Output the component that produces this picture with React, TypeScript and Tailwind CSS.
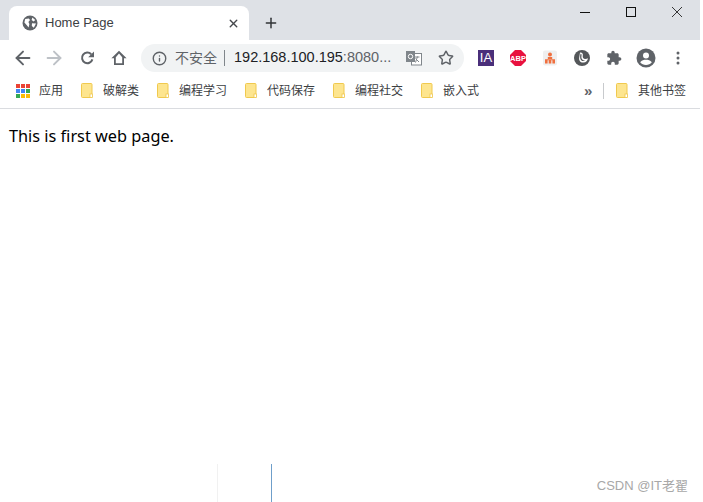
import { ArrowLeft, ArrowRight, Info, Star, X, Plus } from "lucide-react";

const FONT = "font-['Liberation_Sans','Noto_Sans_CJK_SC',sans-serif]";

const bookmarks = [
  { label: "破解类", width: "w-[76px]" },
  { label: "编程学习", width: "w-[88px]" },
  { label: "代码保存", width: "w-[88px]" },
  { label: "编程社交", width: "w-[88px]" },
  { label: "嵌入式", width: "w-[76px]" },
];

function Globe() {
  return (
    <svg width="16" height="16" viewBox="0 0 16 16" className="shrink-0">
      <circle cx="8" cy="8" r="7.5" fill="#5f6368" />
      <path d="M3.2 4 L6.8 3.4 L8 5 L6.4 7 L7.4 9 L6.6 12.4 L4.6 10 L2.4 7.4 Z" fill="#fff" />
      <path d="M10.4 2.6 L13.2 5 L11.6 6.4 L9.6 5 Z M10 8.2 L14 8.6 L11.8 12.8 L9.8 11 Z" fill="#fff" />
    </svg>
  );
}

function Reload() {
  return (
    <svg width="16" height="16" viewBox="0 0 16 16" className="shrink-0">
      <path d="M12.4 9.4a5.3 5.3 0 1 1-1.2-5.2" fill="none" stroke="#5f6368" strokeWidth="2" />
      <path d="M14 1.4v5.8H8.2z" fill="#5f6368" />
    </svg>
  );
}

function HomeIcon() {
  return (
    <svg width="16" height="16" viewBox="0 0 16 16" className="shrink-0">
      <path d="M8 .8 L15.6 8.2 H13 V15 H3 V8.2 H.4 Z M4.8 7.2 V13.3 H11.2 V7.2 L8 3.6 Z" fill="#5f6368" fillRule="evenodd" />
    </svg>
  );
}

function Translate() {
  return (
    <svg width="16" height="16" viewBox="0 0 16 16" className="shrink-0">
      <rect x="5.5" y="3.5" width="10" height="11.5" fill="#fff" stroke="#80868b" />
      <path d="M8.5 7h5M11.5 6.5l-2 6M9.5 8.5l3.5 3.5" stroke="#80868b" fill="none" />
      <rect x="0" y="1" width="9" height="11" fill="#80868b" />
      <circle cx="4.5" cy="6.5" r="2.2" fill="none" stroke="#fff" />
    </svg>
  );
}

function Abp() {
  return (
    <svg width="16" height="16" viewBox="0 0 16 16" className="shrink-0">
      <path d="M5 0 H11 L16 5 V11 L11 16 H5 L0 11 V5 Z" fill="#e8113f" />
      <text x="8" y="11" textAnchor="middle" fontSize="7.5" fontWeight="700" fill="#fff" fontFamily="Liberation Sans">
        ABP
      </text>
    </svg>
  );
}

function OrgIcon() {
  return (
    <svg width="16" height="16" viewBox="0 0 16 16" className="shrink-0">
      <rect x="1" y="0.5" width="14" height="15" rx="2" fill="#efefef" />
      <circle cx="8" cy="4.4" r="2" fill="#f0703f" />
      <path d="M5.8 7h4.4v2H5.8zM3 9.2h10v1H3zM3 10h2.6v3.5H3zM6.7 10h2.6v3.5H6.7zM10.4 10H13v3.5h-2.6z" fill="#f0703f" />
    </svg>
  );
}

function SwirlIcon() {
  return (
    <svg width="16" height="16" viewBox="0 0 16 16" className="shrink-0">
      <circle cx="8" cy="8" r="8" fill="#54575a" />
      <path d="M6 2.4 C8.4 2.2 9.2 4 8.8 5.6 C8.4 7.6 9.4 9 11.2 9 C12.4 9 13.2 8.8 14 8.2 C13.8 10.4 12 12.4 9.4 12.6 C6.4 12.8 4.6 10.6 5.2 7.6 Z" fill="#fff" />
      <path d="M6.6 3.8 C7.6 3.8 7.8 5 7.4 6.4 C7 8.4 8.4 10.4 11 10.4 C9.4 11.6 7 11 6.4 9 C6 7.4 6 5.4 6.6 3.8 Z" fill="#54575a" />
    </svg>
  );
}

function PuzzleIcon() {
  return (
    <svg width="16" height="16" viewBox="0 0 24 24" className="shrink-0">
      <path
        d="M20.5 11H19V7c0-1.1-.9-2-2-2h-4V3.5C13 2.12 11.88 1 10.5 1S8 2.12 8 3.5V5H4c-1.1 0-2 .9-2 2v3.8h1.5c1.5 0 2.7 1.2 2.7 2.7s-1.2 2.7-2.7 2.7H2V20c0 1.1.9 2 2 2h3.8v-1.5c0-1.5 1.2-2.7 2.7-2.7s2.7 1.2 2.7 2.7V22H17c1.1 0 2-.9 2-2v-4h1.5c1.38 0 2.5-1.12 2.5-2.5S21.88 11 20.5 11z"
        fill="#5f6368"
      />
    </svg>
  );
}

function Account() {
  return (
    <svg width="20" height="20" viewBox="0 0 20 20" className="shrink-0">
      <circle cx="10" cy="10" r="9.5" fill="#5f6368" />
      <circle cx="10" cy="7.6" r="3" fill="#fff" />
      <path d="M4.2 14.2 C5.6 12.2 8 11.8 10 11.8 C12 11.8 14.4 12.2 15.8 14.2 C14.4 16 12.4 17 10 17 C7.6 17 5.6 16 4.2 14.2 Z" fill="#fff" />
    </svg>
  );
}

function Dots() {
  return (
    <svg width="4" height="14" viewBox="0 0 4 14" className="shrink-0">
      <circle cx="2" cy="2" r="1.5" fill="#5f6368" />
      <circle cx="2" cy="7" r="1.5" fill="#5f6368" />
      <circle cx="2" cy="12" r="1.5" fill="#5f6368" />
    </svg>
  );
}

function Apps() {
  const colors = ["#ea4335", "#ea4335", "#ea4335", "#4285f4", "#4285f4", "#34a853", "#34a853", "#fbbc04", "#fbbc04"];
  return (
    <div className="grid grid-cols-3 gap-[1px] w-[14px] h-[14px] shrink-0">
      {colors.map((c, i) => (
        <span key={i} className="w-[4px] h-[4px]" style={{ background: c }} />
      ))}
    </div>
  );
}

function Folder() {
  return (
    <svg width="12" height="15" viewBox="0 0 12 15" className="shrink-0">
      <path d="M1.5 .5h8.5a1 1 0 0 1 1 1v12a1 1 0 0 1-1 1H1.5a1 1 0 0 1-1-1v-12a1 1 0 0 1 1-1z" fill="#fde58f" stroke="#f0c94e" />
      <rect x="9" y="11" width="2.5" height="3.5" fill="#fff" stroke="#f0c94e" strokeWidth=".8" />
    </svg>
  );
}

function WindowControls() {
  return (
    <div className="ml-auto self-start flex items-center h-[24px] pr-[18px] gap-[36px]">
      <svg width="10" height="10" viewBox="0 0 10 10" className="shrink-0">
        <path d="M0 5.5h10" stroke="#111" />
      </svg>
      <svg width="10" height="10" viewBox="0 0 10 10" className="shrink-0">
        <rect x=".5" y=".5" width="9" height="9" fill="none" stroke="#111" />
      </svg>
      <svg width="10" height="10" viewBox="0 0 10 10" className="shrink-0">
        <path d="M0 0l10 10M10 0L0 10" stroke="#222" strokeWidth=".9" />
      </svg>
    </div>
  );
}

export default function App() {
  return (
    <div className={`${FONT} h-[502px] w-[703px] bg-white flex flex-col overflow-hidden`}>
      <div className="w-[700px] flex flex-col shrink-0">
        {/* Tab strip */}
        <div className="h-[40px] bg-[#dee1e6] flex items-end">
          <div className="ml-[9px] w-[240px] h-[34px] bg-white rounded-t-[8px] flex items-center pl-[13px] pr-[9px]">
            <Globe />
            <span className="ml-[7px] text-[13px] text-[#3c4043]">Home Page</span>
            <X size={13} strokeWidth={2.6} className="ml-auto text-[#45484c]" />
          </div>
          <div className="ml-[14px] h-[34px] flex items-center">
            <Plus size={16} strokeWidth={2.2} className="text-[#303336]" />
          </div>
          <WindowControls />
        </div>

        {/* Toolbar */}
        <div className="h-[36px] bg-white flex items-center">
          <ArrowLeft size={22} strokeWidth={2.1} className="ml-[12px] text-[#5f6368]" />
          <ArrowRight size={22} strokeWidth={2.1} className="ml-[9px] text-[#bdc1c6]" />
          <div className="ml-[15px]"><Reload /></div>
          <div className="ml-[15px]"><HomeIcon /></div>
          <div className="ml-[14px] w-[323px] h-[28px] rounded-full bg-[#f1f3f4] flex items-center pl-[11px]">
            <Info size={15} strokeWidth={2.2} className="text-[#5f6368]" />
            <span className="ml-[8px] text-[14px] text-[#5f6368]">不安全</span>
            <span className="ml-[7px] w-px h-[16px] bg-[#80868b]" />
            <span className="ml-[9px] text-[14.5px] text-[#202124]">
              192.168.100.195<span className="text-[#5f6368]">:8080...</span>
            </span>
            <div className="ml-[15px]"><Translate /></div>
            <Star size={16} strokeWidth={2.2} className="ml-[16px] text-[#5f6368]" />
          </div>
          <div className="ml-[14px] w-[16px] h-[16px] bg-[#4a2f7a] text-white text-[13px] leading-[16px] text-center shrink-0">IA</div>
          <div className="ml-[16px]"><Abp /></div>
          <div className="ml-[16px]"><OrgIcon /></div>
          <div className="ml-[16px]"><SwirlIcon /></div>
          <div className="ml-[16px]"><PuzzleIcon /></div>
          <div className="ml-[14px]"><Account /></div>
          <div className="ml-[20px]"><Dots /></div>
        </div>

        {/* Bookmarks */}
        <div className="h-[33px] pb-[3px] bg-white border-b border-[#dadce0] flex items-center text-[12px] text-[#3c4043]">
          <div className="ml-[16px]"><Apps /></div>
          <span className="ml-[9px] w-[42px]">应用</span>
          {bookmarks.map((b) => (
            <div key={b.label} className={`${b.width} flex items-center`}>
              <Folder />
              <span className="ml-[10px]">{b.label}</span>
            </div>
          ))}
          <span className="ml-[87px] text-[15px] font-bold text-[#5f6368] leading-none w-[10px]">»</span>
          <span className="ml-[9px] w-px h-[16px] bg-[#c8cacd]" />
          <div className="ml-[12px] flex items-center">
            <Folder />
            <span className="ml-[10px]">其他书签</span>
          </div>
        </div>
      </div>

      {/* Page body */}
      <p className="pl-[9px] pt-[18px] font-['Noto_Sans'] text-[16.3px] leading-[19px] text-black">This is first web page.</p>

      {/* Bottom remnant */}
      <div className="mt-auto h-[38px] flex items-stretch">
        <div className="ml-[217px] w-[54px] border-l border-[#f1f1f1]" />
        <div className="w-px bg-[#6f9fca]" />
        <div className="ml-auto pr-[15px] pt-[12px] text-[13px] leading-[19px] text-[#a8a8a8]">CSDN @IT老翟</div>
      </div>
    </div>
  );
}
